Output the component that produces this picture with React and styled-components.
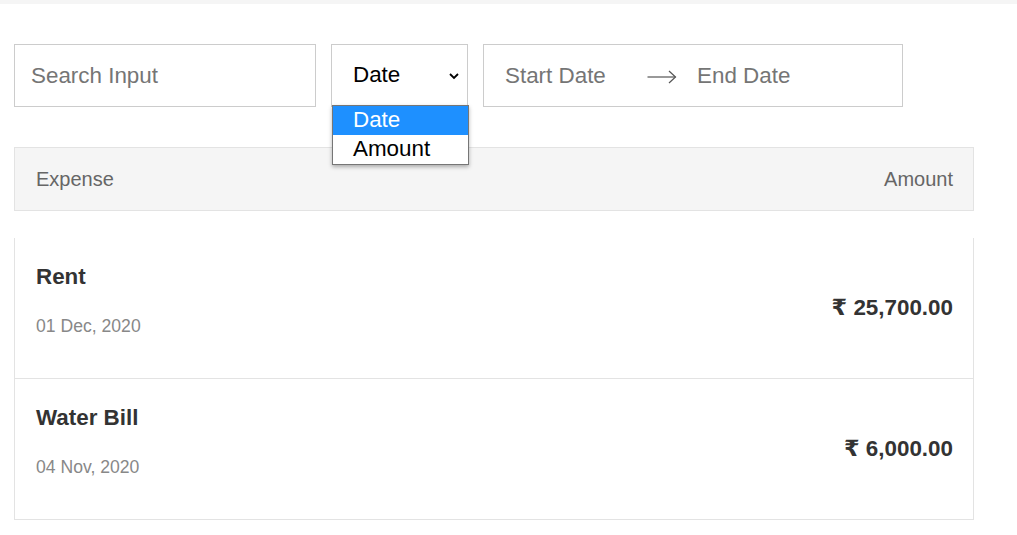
import React from 'react';
import styled, { createGlobalStyle } from 'styled-components';

const GlobalStyle = createGlobalStyle`
  body {
    margin: 0;
    background: #fff;
    font-family: "Liberation Sans", Arial, "DejaVu Sans", sans-serif;
  }
  * { box-sizing: border-box; }
`;

const expenses = [
  { id: 1, name: 'Rent', date: '01 Dec, 2020', amount: '25,700.00' },
  { id: 2, name: 'Water Bill', date: '04 Nov, 2020', amount: '6,000.00' },
];

const App = () => {
  return (
    <>
      <GlobalStyle />
      <TopStrip />
      <Page>
        <Filters>
          <SearchInput placeholder='Search Input' />
          <SortWrap>
            <SortSelect>
              <span>Date</span>
              <svg width='10' height='7' viewBox='0 0 10 7'>
                <polyline points='1,1 5,5 9,1' fill='none' stroke='#000' strokeWidth='1.8' />
              </svg>
            </SortSelect>
            <SortMenu>
              <SortOption $active>Date</SortOption>
              <SortOption>Amount</SortOption>
            </SortMenu>
          </SortWrap>
          <RangePicker>
            <RangeInput placeholder='Start Date' />
            <RangeArrow>
              <svg width='30' height='14' viewBox='0 0 30 14'>
                <line x1='0.5' y1='7' x2='28.5' y2='7' stroke='#555' strokeWidth='1.2' />
                <polyline points='22,1 28.5,7 22,13' fill='none' stroke='#555' strokeWidth='1.2' />
              </svg>
            </RangeArrow>
            <RangeInput placeholder='End Date' />
          </RangePicker>
        </Filters>

        <TableHead>
          <span>Expense</span>
          <span>Amount</span>
        </TableHead>

        <List>
          {expenses.map((item) => (
            <Row key={item.id}>
              <div>
                <Name>{item.name}</Name>
                <DateText>{item.date}</DateText>
              </div>
              <Amount>₹ {item.amount}</Amount>
            </Row>
          ))}
        </List>
      </Page>
    </>
  );
};

const TopStrip = styled.div`
  height: 4px;
  background: #f5f5f5;
`;

const Page = styled.div`
  padding: 40px 43px 0 14px;
`;

const Filters = styled.div`
  display: flex;
  align-items: flex-start;
  gap: 15px;
`;

const SearchInput = styled.input`
  width: 302px;
  height: 63px;
  border: 1px solid #cccccc;
  padding: 0 16px;
  font-family: inherit;
  font-size: 22.4px;
  color: #333;
  outline: none;

  &::placeholder {
    color: #757575;
  }
`;

const SortWrap = styled.div`
  position: relative;
`;

const SortSelect = styled.div`
  width: 137px;
  height: 63px;
  border: 1px solid #cccccc;
  display: flex;
  align-items: center;
  justify-content: space-between;
  padding: 0 8px 0 21px;
  font-size: 22.4px;
  color: #000;
  background: #fff;

  span {
    margin-top: -1px;
  }

  svg {
    margin-top: 2px;
  }
`;

const SortMenu = styled.div`
  position: absolute;
  top: 61px;
  left: 1px;
  width: 137px;
  border: 1px solid #767676;
  background: #fff;
  box-shadow: 0 2px 4px rgba(0, 0, 0, 0.3);
  z-index: 5;
`;

const SortOption = styled.div`
  height: 29px;
  line-height: 27px;
  padding-left: 20px;
  font-size: 22.4px;
  color: ${(props) => (props.$active ? '#fff' : '#000')};
  background: ${(props) => (props.$active ? '#1e90ff' : '#fff')};
`;

const RangePicker = styled.div`
  width: 420px;
  height: 63px;
  border: 1px solid #cccccc;
  display: flex;
  align-items: center;
  padding-left: 21px;
`;

const RangeInput = styled.input`
  width: 122px;
  border: none;
  padding: 0;
  font-family: inherit;
  font-size: 22.4px;
  outline: none;

  &::placeholder {
    color: #757575;
  }
`;

const RangeArrow = styled.span`
  display: flex;
  align-items: center;
  margin: 2px 20px 0 20px;
`;

const TableHead = styled.div`
  margin-top: 40px;
  width: 960px;
  height: 64px;
  display: flex;
  align-items: center;
  justify-content: space-between;
  padding: 0 20px 0 21px;
  background: #f5f5f5;
  border: 1px solid #e3e3e3;
  font-size: 20px;
  color: #666;
`;

const List = styled.div`
  margin-top: 27px;
  width: 960px;
  border: 1px solid #e3e3e3;
  border-top: none;
`;

const Row = styled.div`
  height: 140px;
  display: flex;
  align-items: flex-start;
  justify-content: space-between;
  padding: 26px 20px 0 21px;

  & + & {
    border-top: 1px solid #e3e3e3;
    height: 141px;
  }
`;

const Name = styled.div`
  font-size: 22.4px;
  font-weight: bold;
  color: #333;
`;

const DateText = styled.div`
  margin-top: 26px;
  font-size: 17.6px;
  color: #888;
`;

const Amount = styled.div`
  align-self: center;
  margin-top: -28px;
  font-size: 22.4px;
  font-weight: bold;
  color: #333;
`;

export default App;
